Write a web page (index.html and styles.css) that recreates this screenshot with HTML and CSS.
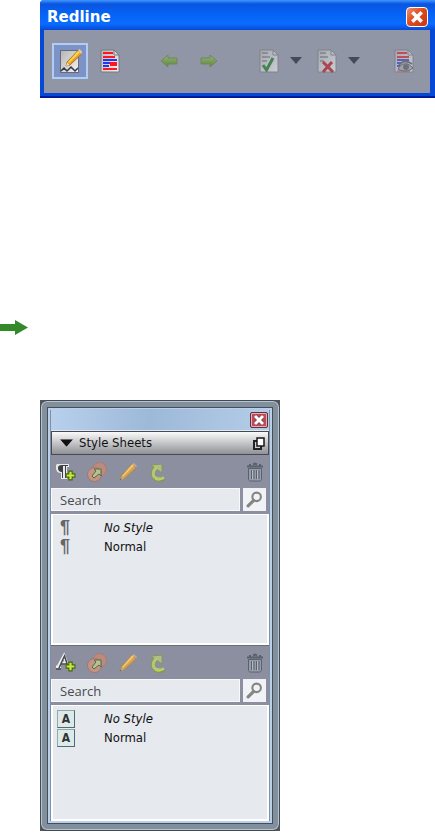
FILE: index.html
```html
<!DOCTYPE html>
<html lang="en">
<head>
<meta charset="UTF-8">
<meta name="viewport" content="width=device-width, initial-scale=1.0">
<title>Redline and Style Sheets</title>
<link rel="stylesheet" href="styles.css">
</head>
<body>

<!-- Shared icons -->
<svg class="icon-defs" aria-hidden="true">
    <defs>
        <linearGradient id="paper" x1="0" y1="0" x2="1" y2="1">
            <stop offset="0" stop-color="#b4b4b6"/>
            <stop offset="1" stop-color="#f4f4f4"/>
        </linearGradient>
        <linearGradient id="leaf" x1="0" y1="0" x2="0" y2="1">
            <stop offset="0" stop-color="#97b27b"/>
            <stop offset="1" stop-color="#5e8738"/>
        </linearGradient>
    </defs>
    <symbol id="icon-page" viewBox="0 0 20 24">
        <path d="M1 1h13l5 5v17H1z" fill="url(#paper)" stroke="#77797f"/>
        <path d="M14 1v5h5z" fill="#d8d8da" stroke="#77797f"/>
    </symbol>
    <symbol id="icon-arrow" viewBox="0 0 18 14">
        <path d="M1 4h9V1l7 6-7 6v-3H1z" fill="url(#leaf)" stroke="#6f8761"/>
    </symbol>
    <symbol id="icon-plus" viewBox="0 0 10 10">
        <path d="M3.500 1h3v2.500H9v3H6.500V9h-3V6.500H1v-3h2.500z" fill="#c5ec32" stroke="#48611b"/>
    </symbol>
    <symbol id="icon-duplicate" viewBox="0 0 22 22">
        <circle cx="13.500" cy="8.500" r="7" fill="#bd8b7d" stroke="#a37d73"/>
        <circle cx="8.500" cy="13.500" r="7" fill="#c49583" stroke="#9e7770"/>
        <path d="M6 15l4-5-2-2h7v7l-2-2-5 4z" fill="#b6c38e" stroke="#58664d"/>
    </symbol>
    <symbol id="icon-pencil" viewBox="0 0 20 20">
        <path d="M14 2l4 4L6 17l-4 1 1-4z" fill="#d9a449" stroke="#a4875a"/>
        <path d="M14.500 2L4 14l1 .8L16 3.500z" fill="#efc979"/>
        <path d="M14.500 2l1.500-1 3 3-1 1.500z" fill="#caa5a0"/>
        <path d="M1.500 18.500l2-4 2.500 2.500z" fill="#b4a797"/>
        <path d="M1.500 18.500l1-2 1 1z" fill="#5d5b5c"/>
    </symbol>
    <symbol id="icon-update" viewBox="0 0 18 20">
        <path d="M8 6C4 9 4 15 9 17c3 1 6 0 7-1" fill="none" stroke="#869560" stroke-width="5"/>
        <path d="M3 3l11-1v9z" fill="#aebf83" stroke="#869560"/>
        <path d="M9 5C4 9 4 15 9 16.500c3 1 5 0 7-1" fill="none" stroke="#b3c774" stroke-width="3"/>
        <path d="M7 17c3 2 6 1 9-1" fill="none" stroke="#cbd94c"/>
    </symbol>
    <symbol id="icon-trash" viewBox="0 0 18 20">
        <path d="M2.500 6.500h13V17c0 1-1 2-2 2h-9c-1 0-2-1-2-2z" fill="#979da7" stroke="#5a616e"/>
        <path d="M1 4.500h16M4 3.500V2M14 3.500V2M7 2.500l2-1 2 1" fill="none" stroke="#5a616e" stroke-width="2"/>
        <path d="M5.500 8v9M8 8v9M10.500 8v9M13 8v9" stroke="#596170"/>
        <path d="M6.500 8v9M11.500 8v9" stroke="#b5bbc4"/>
    </symbol>
    <symbol id="icon-search" viewBox="0 0 16 16">
        <circle cx="10" cy="5.500" r="4" fill="none" stroke="#858585" stroke-width="2"/>
        <path d="M7 9l-5 5" stroke="#858585" stroke-width="3" stroke-linecap="round"/>
    </symbol>
    <symbol id="icon-down" viewBox="0 0 12 7">
        <path d="M0 0h12L6 7z" fill="currentColor"/>
    </symbol>
</svg>

<!-- Redline palette -->
<section class="redline">
    <header class="redline-title">
        <h1>Redline</h1>
        <button type="button" class="redline-close" aria-label="Close">
            <svg viewBox="0 0 12 12"><path d="M2 2l8 8M10 2l-8 8" stroke="#fff" stroke-width="3"/></svg>
        </button>
    </header>
    <div class="redline-tools">
        <div class="tool-group">
            <button type="button" class="tool active" aria-label="Track changes" aria-pressed="true">
                <svg viewBox="0 0 24 26">
                    <rect x="2.500" y="2.500" width="18" height="22" fill="url(#paper)" stroke="#686974"/>
                    <path d="M3 23l3-3 3 3 4-4 4 4 3-3" fill="none" stroke="#353843" stroke-width="1.500"/>
                    <path d="M20 2.500l3.500 3.500L12 17l-4 1 1-4z" fill="#e9a01e" stroke="#a97827"/>
                    <path d="M20 3L10 14l1 1L22 4.500z" fill="#ffd24d"/>
                    <path d="M8 18l1-3.500 2.500 2.500z" fill="#efdcc0"/>
                    <path d="M20 2.500l1.500-1.500 3 3-1.500 2z" fill="#e9c5a9"/>
                </svg>
            </button>
            <button type="button" class="tool" aria-label="Highlight changes">
                <svg viewBox="0 0 24 26">
                    <use href="#icon-page" x="2" y="1" width="20" height="24"/>
                    <path d="M5 5h10M5 9h12M12 17h7" stroke="#ff1620" stroke-width="2"/>
                    <path d="M5 12h14M5 15h14M5 18h6" stroke="#2835ee" stroke-width="2"/>
                    <path d="M12 15h7M5 21h14" stroke="#ff1620" stroke-width="2"/>
                </svg>
            </button>
        </div>
        <div class="tool-group">
            <button type="button" class="tool" aria-label="Previous change">
                <svg class="flip" viewBox="0 0 24 26"><use href="#icon-arrow" x="3" y="6" width="18" height="14"/></svg>
            </button>
            <button type="button" class="tool" aria-label="Next change">
                <svg viewBox="0 0 24 26"><use href="#icon-arrow" x="3" y="6" width="18" height="14"/></svg>
            </button>
        </div>
        <div class="tool-group">
            <div class="split">
                <button type="button" class="tool" aria-label="Accept change">
                    <svg class="faded" viewBox="0 0 24 26">
                        <use href="#icon-page" x="2" y="1" width="20" height="24"/>
                        <path d="M5 5h6M5 9h8M5 13h5" stroke="#4d5058" stroke-width="1"/>
                        <path d="M6 17l3.500 5L16 10" fill="none" stroke="#16751e" stroke-width="3"/>
                    </svg>
                </button>
                <button type="button" class="tool-menu" aria-label="Accept options">
                    <svg viewBox="0 0 12 7"><use href="#icon-down"/></svg>
                </button>
            </div>
            <div class="split">
                <button type="button" class="tool" aria-label="Reject change">
                    <svg class="faded" viewBox="0 0 24 26">
                        <use href="#icon-page" x="2" y="1" width="20" height="24"/>
                        <path d="M5 5h6M5 9h8M5 13h4" stroke="#4d5058" stroke-width="1"/>
                        <path d="M8 14l10 10M17 14L8 24" stroke="#bd1218" stroke-width="3"/>
                    </svg>
                </button>
                <button type="button" class="tool-menu" aria-label="Reject options">
                    <svg viewBox="0 0 12 7"><use href="#icon-down"/></svg>
                </button>
            </div>
        </div>
        <button type="button" class="tool" aria-label="Show tracking">
            <svg class="faded" viewBox="0 0 24 26">
                <use href="#icon-page" x="2" y="1" width="20" height="24"/>
                <path d="M5 5h10M5 9h12" stroke="#e31d24" stroke-width="2"/>
                <path d="M5 12h12M5 15h5M5 18h3" stroke="#3640cf" stroke-width="2"/>
                <path d="M5 23h13" stroke="#e32d34"/>
                <path d="M6 21c2-4 6-6 10-5 2 1 4 3 5 4-2 2-5 3-7 3s-5 0-8-2z" fill="#aaa" stroke="#494d54"/>
                <circle cx="14" cy="19" r="3" fill="#555a61"/>
                <path d="M7 17c3-4 8-5 13-1" fill="none" stroke="#555a61" stroke-width="2"/>
            </svg>
        </button>
    </div>
</section>

<svg class="pointer" viewBox="0 0 28 16" aria-hidden="true">
    <path d="M0 4h15V0l13 7.500L15 15v-4H0z" fill="#34892b"/>
</svg>

<!-- Style Sheets palette -->
<section class="palette">
    <div class="palette-inner">
        <div class="palette-title">
            <button type="button" class="palette-close" aria-label="Close">
                <svg viewBox="0 0 16 14"><path d="M4 3l8 8M12 3l-8 8" stroke="#6b3b4a" stroke-width="4"/><path d="M4 3l8 8M12 3l-8 8" stroke="#fff" stroke-width="3"/></svg>
            </button>
        </div>
        <header class="palette-header">
            <svg class="collapse" viewBox="0 0 12 7"><use href="#icon-down"/></svg>
            <h2>Style Sheets</h2>
            <button type="button" class="palette-menu" aria-label="Palette menu">
                <svg viewBox="0 0 12 13"><path d="M1 4h7v8H1z" fill="#ccc" stroke="#222" stroke-width="2"/><path d="M4 1h7v8H4z" fill="#fff" stroke="#161616" stroke-width="1.500"/></svg>
            </button>
        </header>

        <!-- Paragraph styles -->
        <div class="pane">
            <div class="pane-tools">
                <button type="button" aria-label="New paragraph style">
                    <svg viewBox="0 0 22 22">
                        <path d="M2 3h12v3h-2v12H6v-6C3 12 1 10 1 7s0-3 1-4z" fill="#e8e8ea"/>
                        <path d="M7 11C4 11 3 9 3 7s1-3 4-3h6v1h-2v12h-1V5H8v12H7z" fill="#3d3f43"/>
                        <use href="#icon-plus" x="10" y="9" width="11" height="11"/>
                    </svg>
                </button>
                <button type="button" aria-label="Duplicate"><svg viewBox="0 0 22 22"><use href="#icon-duplicate"/></svg></button>
                <button type="button" aria-label="Edit"><svg viewBox="0 0 22 22"><use href="#icon-pencil" x="1" y="1" width="20" height="20"/></svg></button>
                <button type="button" aria-label="Update"><svg viewBox="0 0 22 22"><use href="#icon-update" x="0" y="1" width="18" height="20"/></svg></button>
                <button type="button" class="trash" aria-label="Delete"><svg viewBox="0 0 22 22"><use href="#icon-trash" x="2" y="1" width="18" height="20"/></svg></button>
            </div>
            <form class="search">
                <input type="text" placeholder="Search" aria-label="Search paragraph styles">
                <button type="button" aria-label="Search"><svg viewBox="0 0 16 16"><use href="#icon-search"/></svg></button>
            </form>
            <ul class="styles">
                <li><span class="pilcrow">¶</span><em>No Style</em></li>
                <li><span class="pilcrow">¶</span>Normal</li>
            </ul>
        </div>

        <!-- Character styles -->
        <div class="pane">
            <div class="pane-tools">
                <button type="button" aria-label="New character style">
                    <svg viewBox="0 0 22 22">
                        <path d="M3 15L9 4l4 11M6 11h6M1 15h5" fill="none" stroke="#eeeeef" stroke-width="3"/>
                        <path d="M4 16L9.500 4l4 12M6 12h6M1 17h5" fill="none" stroke="#44474c" stroke-width="1.500"/>
                        <use href="#icon-plus" x="10" y="9" width="11" height="11"/>
                    </svg>
                </button>
                <button type="button" aria-label="Duplicate"><svg viewBox="0 0 22 22"><use href="#icon-duplicate"/></svg></button>
                <button type="button" aria-label="Edit"><svg viewBox="0 0 22 22"><use href="#icon-pencil" x="1" y="1" width="20" height="20"/></svg></button>
                <button type="button" aria-label="Update"><svg viewBox="0 0 22 22"><use href="#icon-update" x="0" y="1" width="18" height="20"/></svg></button>
                <button type="button" class="trash" aria-label="Delete"><svg viewBox="0 0 22 22"><use href="#icon-trash" x="2" y="1" width="18" height="20"/></svg></button>
            </div>
            <form class="search">
                <input type="text" placeholder="Search" aria-label="Search character styles">
                <button type="button" aria-label="Search"><svg viewBox="0 0 16 16"><use href="#icon-search"/></svg></button>
            </form>
            <ul class="styles characters">
                <li><span class="letter">A</span><em>No Style</em></li>
                <li><span class="letter">A</span>Normal</li>
            </ul>
        </div>
    </div>
</section>

</body>
</html>
```
FILE: styles.css
```css
* {
    box-sizing: border-box;
}

body {
    margin: 0;
    background-color: #fff;
    color: #111;
    font-family: "DejaVu Sans Condensed", "DejaVu Sans", Tahoma, sans-serif;
    font-size: 13px;
}

h1, h2, ul {
    margin: 0;
    padding: 0;
}

button {
    display: flex;
    align-items: center;
    justify-content: center;
    flex: none;
    padding: 0;
    border: 0;
    background: none;
    color: inherit;
}

svg {
    display: block;
}

.icon-defs {
    position: absolute;
    width: 0;
    height: 0;
}

/* Redline palette */
.redline {
    margin: 0 0 0 40px;
    padding: 0 5px 3px 4px;
    background-color: #0b48da;
    border-bottom: 2px solid #001b9c;
    border-radius: 4px 0 0 0;
    background-image: linear-gradient(#3f96ff, #0a55e0 4px, #0561f2 12px, #0a6cff 24px, #0748d4 30px);
    background-repeat: no-repeat;
}

.redline-title {
    display: flex;
    align-items: center;
    justify-content: space-between;
    height: 30px;
    padding: 4px 2px 0 3px;
}

.redline-title h1 {
    color: #fff;
    font-family: "DejaVu Sans", Verdana, sans-serif;
    font-size: 15px;
    font-weight: bold;
    line-height: 20px;
}

.redline-close {
    width: 22px;
    height: 20px;
    border: 1px solid #fff;
    border-radius: 4px;
    background: linear-gradient(135deg, #ef9070, #df4b20 45%, #c93510);
}

.redline-close svg {
    width: 14px;
    height: 14px;
}

.redline-tools {
    display: flex;
    align-items: center;
    justify-content: space-between;
    height: 63px;
    padding: 0 8px 2px;
    background-color: #9096a5;
}

.tool-group {
    display: flex;
    gap: 4px;
}

.tool {
    width: 36px;
    height: 36px;
    border: 2px solid transparent;
}

.tool.active {
    border-color: #b0cdf5;
    background-color: #7d92c5;
}

.tool svg {
    width: 24px;
    height: 26px;
}

.tool .flip {
    transform: scaleX(-1);
}

.tool .faded {
    opacity: 0.6;
}

.split {
    display: flex;
}

.tool-menu {
    width: 18px;
    color: #454b56;
}

.tool-menu svg {
    width: 12px;
    height: 7px;
}

.pointer {
    width: 28px;
    height: 16px;
    margin-top: 222px;
}

/* Style Sheets palette */
.palette {
    max-width: 240px;
    margin: 64px 0 0 40px;
    background-color: #555;
}

.palette-inner {
    padding: 8px 10px 9px;
    border: 1px solid #414953;
    border-radius: 7px;
    background-color: #82909e;
    box-shadow: inset 0 0 0 1px #b8c4d2, inset 0 0 0 6px #82909e, inset 0 0 0 7px #444e5a, inset 0 0 0 9px #b9cfea;
}

.palette-title {
    display: flex;
    justify-content: flex-end;
    height: 22px;
    padding: 3px 1px 0 0;
    background: linear-gradient(90deg, #b8d0ec, #9cb9d8 45%, #b4cde8);
    border-bottom: 1px solid #dfe9f5;
}

.palette-close {
    width: 18px;
    height: 16px;
    border: 1px solid #63303a;
    border-radius: 2px;
    background-color: #bd4b58;
    box-shadow: inset 0 0 0 1px #e4b0b8;
}

.palette-close svg {
    width: 16px;
    height: 14px;
}

.palette-header {
    display: flex;
    align-items: center;
    height: 24px;
    padding: 0 3px 0 8px;
    border: 1px solid #484a50;
    background: linear-gradient(#fafafa, #8f9197);
}

.palette-header h2 {
    margin-left: 6px;
    font-size: 13px;
    font-weight: normal;
    line-height: 20px;
}

.collapse {
    width: 13px;
    height: 8px;
}

.palette-menu {
    margin-left: auto;
}

.palette-menu svg {
    width: 12px;
    height: 13px;
}

.pane {
    background-color: #8b8fa0;
}

.pane + .pane {
    border-top: 1px solid #686f72;
}

.pane-tools {
    display: flex;
    align-items: center;
    gap: 9px;
    height: 33px;
    padding: 0 3px 0 4px;
}

.pane-tools svg {
    width: 22px;
    height: 22px;
}

.trash {
    margin-left: auto;
}

.search {
    display: flex;
    gap: 3px;
    padding: 0 3px 3px 0;
}

.search input {
    flex: 1;
    min-width: 0;
    height: 23px;
    padding: 0 8px;
    border: 1px solid #f8f9fa;
    border-radius: 0;
    background-color: #e6e9ee;
    font-family: "Open Sans", sans-serif;
    font-size: 13px;
}

.search input::placeholder {
    color: #484a50;
    opacity: 1;
}

.search button {
    width: 23px;
    height: 23px;
    background-color: #f0f2f5;
}

.search button svg {
    width: 17px;
    height: 17px;
}

.styles {
    min-height: 131px;
    padding: 3px 7px;
    border: 2px solid #fff;
    border-top-width: 1px;
    background-color: #e6e9ee;
    list-style: none;
}

.characters {
    min-height: 116px;
    padding-left: 4px;
}

.styles li {
    display: grid;
    grid-template-columns: 44px 1fr;
    align-items: center;
    height: 19px;
}

.characters li {
    grid-template-columns: 47px 1fr;
}

.pilcrow {
    color: #666;
    font-family: "Liberation Sans", Arial, sans-serif;
    font-size: 18px;
    font-weight: bold;
    line-height: 19px;
}

.letter {
    width: 18px;
    height: 18px;
    border: 1px solid #93a9a9;
    border-right-color: #506b70;
    border-bottom-color: #506b70;
    background-color: #dcebea;
    color: #333;
    font-size: 12px;
    font-weight: bold;
    line-height: 16px;
    text-align: center;
}
```
